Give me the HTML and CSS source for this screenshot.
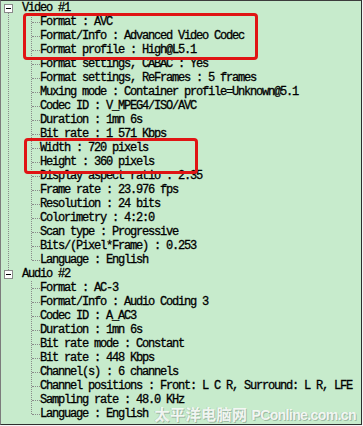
FILE: index.html
```html
<!DOCTYPE html>
<html>
<head>
<meta charset="utf-8">
<link rel="stylesheet" href="styles.css">
</head>
<body>
<div class="frame">
  <div class="panel">
    <div class="group">
      <div class="head"><span class="toggle"></span><span class="label">Video #1</span></div>
      <ul class="items">
        <li>Format : AVC</li>
        <li>Format/Info : Advanced Video Codec</li>
        <li>Format profile : High@L5.1</li>
        <li>Format settings, CABAC : Yes</li>
        <li>Format settings, ReFrames : 5 frames</li>
        <li>Muxing mode : Container profile=Unknown@5.1</li>
        <li>Codec ID : V_MPEG4/ISO/AVC</li>
        <li>Duration : 1mn 6s</li>
        <li>Bit rate : 1 571 Kbps</li>
        <li>Width : 720 pixels</li>
        <li>Height : 360 pixels</li>
        <li>Display aspect ratio : 2.35</li>
        <li>Frame rate : 23.976 fps</li>
        <li>Resolution : 24 bits</li>
        <li>Colorimetry : 4:2:0</li>
        <li>Scan type : Progressive</li>
        <li>Bits/(Pixel*Frame) : 0.253</li>
        <li>Language : English</li>
      </ul>
    </div>
    <div class="group last">
      <div class="head"><span class="toggle"></span><span class="label">Audio #2</span></div>
      <ul class="items">
        <li>Format : AC-3</li>
        <li>Format/Info : Audio Coding 3</li>
        <li>Codec ID : A_AC3</li>
        <li>Duration : 1mn 6s</li>
        <li>Bit rate mode : Constant</li>
        <li>Bit rate : 448 Kbps</li>
        <li>Channel(s) : 6 channels</li>
        <li>Channel positions : Front: L C R, Surround: L R, LFE</li>
        <li>Sampling rate : 48.0 KHz</li>
        <li>Language : English</li>
      </ul>
    </div>

    <div class="mark mark-format"></div>
    <div class="mark mark-size"></div>
    <div class="watermark"><span class="wm-cn">太平洋电脑网</span><span class="wm-en">PConline.com.cn</span></div>
  </div>
</div>
</body>
</html>
```

FILE: styles.css
```css
* { box-sizing: border-box; }

html, body {
  margin: 0;
  padding: 0;
  background: #ffffff;
}

.frame {
  width: 363px;
  height: 426px;
  padding: 0 1px 1px 0;
  background: #f4f4f4;
}

.panel {
  position: relative;
  width: 362px;
  height: 425px;
  background: #c7ebcc;
  border-top: 1px solid #3c3c3c;
  border-left: 1px solid #7c7c7c;
  border-right: 1px solid #2e2e2e;
  border-bottom: 1px solid #2e2e2e;
  overflow: hidden;
  font-family: "Liberation Mono", "Noto Sans CJK SC", monospace;
  font-size: 12px;
  letter-spacing: -1.2px;
  color: #000;
  -webkit-text-stroke: 0.3px #000;
}

.group {
  position: relative;
}

.group::after {
  content: "";
  position: absolute;
  left: 7px;
  top: 12px;
  bottom: -3px;
  border-left: 1px dotted #8a8a8a;
}

.group.last::after {
  display: none;
}

.head {
  display: flex;
  align-items: center;
  height: 14px;
  line-height: 14px;
  white-space: nowrap;
}

.toggle {
  position: relative;
  flex: none;
  width: 9px;
  height: 9px;
  margin-left: 3px;
  border: 1px solid #8a8a8a;
  background: #ffffff;
}

.toggle::before {
  content: "";
  position: absolute;
  left: 1px;
  top: 3px;
  width: 5px;
  height: 1px;
  background: #000;
}

.label {
  margin-left: 9px;
}

.items {
  position: relative;
  list-style: none;
  margin: 0;
  padding: 0 0 0 39px;
}

.items::before {
  content: "";
  position: absolute;
  left: 30px;
  top: 0;
  bottom: 7px;
  border-left: 1px dotted #8a8a8a;
}

.items li {
  position: relative;
  height: 14px;
  line-height: 14px;
  white-space: nowrap;
}

.items li::before {
  content: "";
  position: absolute;
  left: -8px;
  top: 7px;
  width: 8px;
  border-top: 1px dotted #8a8a8a;
}

.mark {
  position: absolute;
  border: 3px solid #e01414;
  border-radius: 4px;
}

.mark-format {
  left: 22px;
  top: 12px;
  width: 235px;
  height: 47px;
}

.mark-size {
  left: 23px;
  top: 137px;
  width: 174px;
  height: 36px;
}

.watermark {
  position: absolute;
  right: 5px;
  bottom: 0;
  display: flex;
  align-items: baseline;
  gap: 4px;
  letter-spacing: 0;
  -webkit-text-stroke: 0;
  color: rgba(255, 255, 255, 0.85);
  font-weight: bold;
  text-shadow: 1px 1px 0 rgba(110, 130, 115, 0.45), -1px 0 0 rgba(150, 170, 155, 0.35);
  white-space: nowrap;
  line-height: 17px;
}

.wm-cn {
  font-family: "Noto Sans CJK SC", sans-serif;
  font-size: 15px;
  letter-spacing: 0.5px;
}

.wm-en {
  font-family: "Liberation Sans", Arial, sans-serif;
  font-size: 14px;
  letter-spacing: -0.6px;
}
```
